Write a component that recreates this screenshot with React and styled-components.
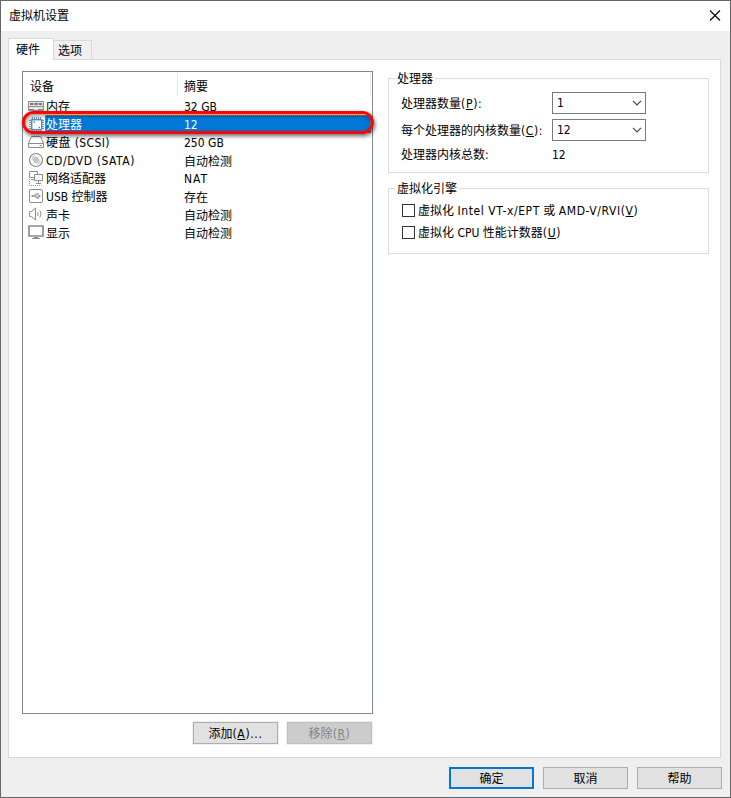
import React from "react";
import styled, { createGlobalStyle } from "styled-components";

const Global = createGlobalStyle`
  * { box-sizing: border-box; }
  html, body { margin: 0; padding: 0; background: #fff; }
  body {
    font: 12px/18px "DejaVu Sans Condensed", "DejaVu Sans", "Noto Sans CJK SC", sans-serif;
    font-stretch: condensed;
    color: #000;
  }
`;

const Window = styled.div`
  display: flex;
  flex-direction: column;
  width: 731px;
  height: 798px;
  background: #efefef;
  border: 1px solid #666;
`;
const TitleBar = styled.header`
  display: flex;
  align-items: center;
  justify-content: space-between;
  height: 30px;
  padding: 0 9px 0 8px;
  background: #fff;
`;
const TabStrip = styled.nav`
  display: flex;
  align-items: flex-end;
  height: 28px;
  padding-left: 7px;
`;
const Tab = styled.div`
  width: ${(p) => (p.$active ? 46 : 38)}px;
  height: ${(p) => (p.$active ? 22 : 19)}px;
  padding: ${(p) => (p.$active ? "2px 0 0 7px" : "1px 0 0 4px")};
  background: ${(p) => (p.$active ? "#fff" : "#f0f0f0")};
  border: 1px solid #d9d9d9;
  border-bottom: 0;
  border-left-width: ${(p) => (p.$active ? 1 : 0)}px;
  margin-bottom: ${(p) => (p.$active ? -1 : 0)}px;
  z-index: ${(p) => (p.$active ? 1 : 0)};
`;
const Pane = styled.main`
  display: flex;
  gap: 15px;
  width: 713px;
  height: 699px;
  margin-left: 7px;
  padding: 11px 11px 0 13px;
  background: #fff;
  border: 1px solid #d9d9d9;
`;
const Left = styled.section`
  width: 351px;
`;
const DeviceList = styled.div`
  height: 643px;
  border: 1px solid #828790;
`;
const HeaderRow = styled.div`
  display: flex;
  height: 25px;
  padding-top: 1px;
`;
const HeaderCell = styled.div`
  width: ${(p) => p.$w}px;
  padding: 5px 0 0 ${(p) => p.$pad}px;
  border-right: 1px solid #e5e5e5;
`;
const Row = styled.div`
  position: relative;
  display: flex;
  height: 18px;
  padding-left: 5px;
`;
const IconBox = styled.div`
  width: 17px;
  height: 18px;
  padding-top: 1px;
  svg { display: block; }
`;
const Cells = styled.div`
  display: flex;
  flex: 1;
  height: 18px;
  margin-right: 1px;
  color: ${(p) => (p.$selected ? "#fff" : "#000")};
  background: ${(p) => (p.$selected ? "#0078d7" : "transparent")};
  outline: ${(p) => (p.$selected ? "1px dotted #d58a42" : "none")};
  outline-offset: -1px;
`;
const Cell = styled.span`
  width: ${(p) => p.$w || "auto"};
  padding-left: 1px;
  line-height: ${(p) => (p.$low ? 22 : 20)}px;
  letter-spacing: ${(p) => p.$ls || 0}px;
  white-space: nowrap;
`;
const Ring = styled.div`
  position: absolute;
  z-index: 2;
  left: -1px;
  top: -4px;
  width: 352px;
  height: 23px;
  border: 3px solid #f90606;
  border-radius: 12px;
  box-shadow: 1px 2px 4px rgba(0, 0, 0, 0.6), inset 1px 2px 4px rgba(0, 0, 0, 0.4);
`;
const ListActions = styled.div`
  display: flex;
  justify-content: flex-end;
  gap: 9px;
  padding: 8px 1px 0 0;
`;
const Button = styled.button`
  width: 85px;
  height: 22px;
  padding: ${(p) => (p.$primary ? 1 : 2)}px 0 0;
  font: inherit;
  line-height: 18px;
  color: ${(p) => (p.disabled ? "#838383" : "#000")};
  background: ${(p) => (p.disabled ? "#ccc" : "#e1e1e1")};
  border: ${(p) => (p.$primary ? "2px solid #0078d7" : `1px solid ${p.disabled ? "#bfbfbf" : "#adadad"}`)};
  box-shadow: ${(p) => (p.$halo ? "0 0 0 1px #f0f0f0" : "none")};
`;
const Right = styled.section`
  display: flex;
  flex-direction: column;
  gap: 15px;
  width: 321px;
  padding-top: 7px;
`;
const Group = styled.section`
  height: ${(p) => p.$h}px;
  border: 1px solid #dcdcdc;
`;
const GroupTitle = styled.div`
  width: fit-content;
  height: 18px;
  margin: -9px 0 0 6px;
  padding: 0 2px;
  background: #fff;
`;
const Field = styled.div`
  display: grid;
  grid-template-columns: 151px 94px;
  align-items: center;
  height: ${(p) => p.$h}px;
  margin-left: 12px;
  white-space: nowrap;
`;
const Select = styled.div`
  display: flex;
  align-items: center;
  justify-content: space-between;
  height: 22px;
  margin-top: -2px;
  padding: 0 3px 0 4px;
  border: 1px solid #7a7a7a;
`;
const Checks = styled.div`
  padding-top: 1px;
`;
const Check = styled.label`
  display: flex;
  align-items: center;
  gap: 3px;
  height: 22px;
  padding-left: 13px;
  white-space: nowrap;
`;
const CheckText = styled.span`
  padding-top: 2px;
`;
const Box = styled.span`
  width: 13px;
  height: 13px;
  border: 1px solid #333;
`;
const Footer = styled.footer`
  display: flex;
  justify-content: flex-end;
  gap: 9px;
  padding: 9px 8px 0 0;
`;
const Fit = styled.span`
  letter-spacing: ${(p) => p.$ls || 0}px;
`;

const Svg = ({ children, stroke = "#8c8c8c" }) => (
  <svg width="16" height="16" viewBox="0 0 16 16" fill="none" stroke={stroke}>
    {children}
  </svg>
);
const icons = {
  memory: (
    <Svg>
      <path d="M.5 3.500h15v9H.5z" fill="#e4e4e4" />
      <path d="M2 6h3.500M6.500 6H10M11 6h3" strokeWidth="2" stroke="#777" />
      <path d="M1 8.500h14M1 11.500h5M10 11.500h5" />
      <path d="M7 10.500h2" stroke="#fff" />
    </Svg>
  ),
  cpu: (
    <Svg>
      <path d="M4.500 1v15M6.500 1v15M8.500 1v15M10.500 1v15M12.500 1v15M1 4.500h15M1 6.500h15M1 8.500h15M1 10.500h15M1 12.500h15" stroke="#7898b0" />
      <rect x="3.700" y="3.700" width="10" height="10" fill="#fff" stroke="#4c94c8" strokeWidth="1.500" />
      <path d="M5.500 6H7M10.500 11.500H12" stroke="#3d8fcd" strokeWidth="1.500" />
    </Svg>
  ),
  disk: (
    <Svg>
      <path d="M3.500 2.500h9l3 6.500v4.500H.5V9zM.5 9.500h15" />
      <path d="M11.500 11.500h2.500" />
    </Svg>
  ),
  cd: (
    <Svg>
      <circle cx="8" cy="8" r="6.500" strokeWidth="1.200" />
      <circle cx="8" cy="8" r="2.200" />
      <circle cx="8" cy="8" r=".4" />
      <path d="M4 7.500c.2-1.900 1.500-3.300 3.300-3.500M12 8.500c-.2 1.900-1.500 3.300-3.300 3.500" stroke="#aaa" />
    </Svg>
  ),
  net: (
    <Svg>
      <path d="M6.500 7.500h-5v-6h8v3M3 9.500h3" />
      <path d="M6.500 4.500h8v6h-8zM10.500 11v2M8 13.500h5" />
      <path d="M1.500 9v6.500h12" strokeDasharray="1 1" />
    </Svg>
  ),
  usb: (
    <Svg>
      <rect x="1.500" y="1.500" width="13" height="13" rx="1.500" />
      <path d="M4 8h7M6 8l1.500-2H9M7 8l1.500 2H10" />
      <circle cx="4.500" cy="8" r="1.100" fill="#8a8a8a" stroke="none" />
      <path d="M11 6.500L13 8l-2 1.500zM9 5h1.500v1.500H9zM9.500 9.300h1.500v1.500H9.500z" fill="#8a8a8a" stroke="none" />
    </Svg>
  ),
  sound: (
    <Svg>
      <path d="M1.500 5.500h2L7.500 2v12l-4-3.500h-2z" />
      <path d="M9.500 6c.8 1.200.8 2.800 0 4M11.700 4.500c1.600 2 1.600 5 0 7" />
    </Svg>
  ),
  display: (
    <Svg>
      <path d="M1 2h14v10H1z" strokeWidth="1.700" />
      <path d="M4 14.500h8M6 13.500h4" />
    </Svg>
  ),
};

const devices = [
  { icon: "memory", name: "内存", summary: "32 GB" },
  { icon: "cpu", name: "处理器", summary: "12" },
  { icon: "disk", name: "硬盘 (SCSI)", nameLs: 0.4, summary: "250 GB" },
  { icon: "cd", name: "CD/DVD (SATA)", nameLs: 0.56, summary: "自动检测", low: true },
  { icon: "net", name: "网络适配器", summary: "NAT", ls: 1 },
  { icon: "usb", name: "USB 控制器", summary: "存在", low: true },
  { icon: "sound", name: "声卡", nameLow: true, summary: "自动检测", low: true },
  { icon: "display", name: "显示", nameLow: true, summary: "自动检测", low: true },
];

const Chevron = () => (
  <svg width="10" height="6" viewBox="0 0 10 6" fill="none" stroke="#444" strokeWidth="1.200">
    <path d="M1 .8L5 4.800 9 .8" />
  </svg>
);

export default function App() {
  return (
    <>
      <Global />
      <Window>
        <TitleBar>
          <span>虚拟机设置</span>
          <svg width="12" height="12" viewBox="0 0 12 12" stroke="#000" strokeWidth="1.100">
            <path d="M1 .5l10 10M11 .5L1 10.500" />
          </svg>
        </TitleBar>
        <TabStrip>
          <Tab $active>硬件</Tab>
          <Tab>选项</Tab>
        </TabStrip>
        <Pane>
          <Left>
            <DeviceList>
              <HeaderRow>
                <HeaderCell $w={155} $pad={7}>设备</HeaderCell>
                <HeaderCell $w={193} $pad={6}>摘要</HeaderCell>
              </HeaderRow>
              {devices.map((d) => (
                <Row key={d.icon}>
                  <IconBox>{icons[d.icon]}</IconBox>
                  <Cells $selected={d.icon === "cpu"}>
                    <Cell $w="138px" $ls={d.nameLs} $low={d.nameLow}>{d.name}</Cell>
                    <Cell $ls={d.ls} $low={d.low}>{d.summary}</Cell>
                  </Cells>
                  {d.icon === "cpu" && <Ring />}
                </Row>
              ))}
            </DeviceList>
            <ListActions>
              <Button $halo>添加<Fit $ls={0.65}>(<u>A</u>)...</Fit></Button>
              <Button $halo disabled>移除<Fit $ls={0.6}>(<u>R</u>)</Fit></Button>
            </ListActions>
          </Left>
          <Right>
            <Group $h={95}>
              <GroupTitle>处理器</GroupTitle>
              <Field $h={31}>
                <span>处理器数量<Fit $ls={0.7}>(<u>P</u>):</Fit></span>
                <Select>1<Chevron /></Select>
              </Field>
              <Field $h={23}>
                <span>每个处理器的内核数量<Fit $ls={0.6}>(<u>C</u>):</Fit></span>
                <Select>12<Chevron /></Select>
              </Field>
              <Field $h={25}>
                <span>处理器内核总数<Fit $ls={0.7}>:</Fit></span>
                <span>12</span>
              </Field>
            </Group>
            <Group $h={66}>
              <GroupTitle>虚拟化引擎</GroupTitle>
              <Checks>
                <Check>
                  <Box />
                  <CheckText>虚拟化 <Fit $ls={0.6}>Intel VT-x/EPT</Fit> 或 <Fit $ls={0.6}>AMD-V/RVI(<u>V</u>)</Fit></CheckText>
                </Check>
                <Check>
                  <Box />
                  <CheckText>虚拟化 CPU 性能计数器<Fit $ls={0.6}>(<u>U</u>)</Fit></CheckText>
                </Check>
              </Checks>
            </Group>
          </Right>
        </Pane>
        <Footer>
          <Button $primary>确定</Button>
          <Button>取消</Button>
          <Button>帮助</Button>
        </Footer>
      </Window>
    </>
  );
}
